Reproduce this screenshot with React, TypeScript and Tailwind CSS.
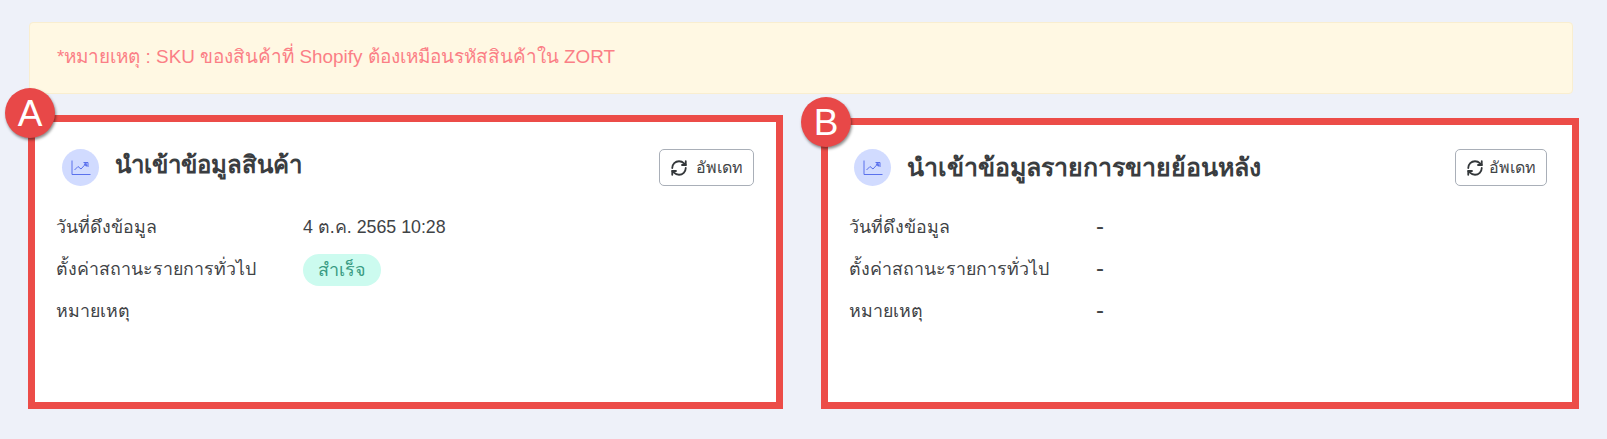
import { RefreshCw } from "lucide-react";

const font = { fontFamily: '"Liberation Sans", "Noto Sans", sans-serif' };

function ChartIcon() {
  return (
    <span className="flex h-[37px] w-[37px] shrink-0 items-center justify-center rounded-full bg-[#d1dbff]">
      <svg width="20" height="16" viewBox="0 0 20 16" fill="none" stroke="#5a71ec" strokeWidth="1">
        <path d="M1 0.5V14.5H19.5" />
        <path d="M3.5 10L7 6.5L10 9L15.5 3" />
        <path d="M12.5 2.5H17V7" />
        <path d="M13.5 3.5L16 6" strokeWidth="2" />
      </svg>
    </span>
  );
}

function Row({ label, children, pill, dash, labelClass }: any) {
  return (
    <div className="flex h-[42px] items-start text-[17.8px] leading-[28px] text-[#3f4346]">
      <div className={`shrink-0 pt-[1px] ${labelClass}`}>{label}</div>
      <div className={pill ? "" : dash ? "text-[24px] font-light" : "pt-[1px]"}>{children}</div>
    </div>
  );
}

function Card({ title, className, badge, badgeClass, headerClass, titleClass, buttonClass, bodyClass, children }: any) {
  return (
    <section className={`relative border-[7px] border-[#ec4c48] bg-white ${className}`}>
      <div className={`absolute flex h-[50px] w-[50px] items-center justify-center rounded-full bg-[#e84848] text-[37px] leading-none text-white shadow-[1px_2px_3px_rgba(0,0,0,0.45)] ${badgeClass}`}>
        {badge}
      </div>
      <div className={`flex items-start justify-between ${headerClass}`}>
        <div className="flex items-center gap-[16px]">
          <ChartIcon />
          <h2 className={`font-bold leading-[36px] text-[#3a3d40] ${titleClass}`}>{title}</h2>
        </div>
        <button className={`flex h-[37px] items-center rounded-[5px] border border-[#a9afb8] bg-white text-[16px] text-[#3f4346] ${buttonClass}`}>
          <RefreshCw size={18} strokeWidth={2.4} className="text-[#33373a]" />
          อัพเดท
        </button>
      </div>
      <div className={`pt-[17px] ${bodyClass}`}>{children}</div>
    </section>
  );
}

export default function App() {
  return (
    <div className="h-[439px] w-[1607px] overflow-hidden bg-[#eef1f9] pl-[28px] pt-[22px]" style={font}>
      <div className="ml-[1px] flex h-[72px] w-[1544px] items-center rounded-[4px] border border-[#f9eed0] bg-[#fff8e3] pb-[1px] pl-[27px] text-[18.9px] text-[#fb7f86]">
        *หมายเหตุ : SKU ของสินค้าที่ Shopify ต้องเหมือนรหัสสินค้าใน ZORT
      </div>
      <div className="mt-[21px] flex items-end gap-[38px]">
        <Card
          title="นำเข้าข้อมูลสินค้า"
          badge="A"
          badgeClass="-left-[30px] -top-[34px]"
          className="h-[294px] w-[755px]"
          headerClass="h-[73px] pl-[27px] pr-[22px] pt-[27px]"
          titleClass="-mt-[6px] text-[24px]"
          buttonClass="gap-[8px] pl-[10px] pr-[10px]"
          bodyClass="pl-[21px]"
        >
          <Row label="วันที่ดึงข้อมูล" labelClass="w-[247px]">4 ต.ค. 2565 10:28</Row>
          <Row label="ตั้งค่าสถานะรายการทั่วไป" labelClass="w-[247px]" pill>
            <span className="flex h-[32px] w-[78px] items-center justify-center rounded-full bg-[#ccfbef] text-[18px] text-[#3a9c83]">สำเร็จ</span>
          </Row>
          <Row label="หมายเหตุ" labelClass="w-[247px]" />
        </Card>
        <Card
          title="นำเข้าข้อมูลรายการขายย้อนหลัง"
          badge="B"
          badgeClass="-left-[27px] -top-[28px]"
          className="h-[291px] w-[758px]"
          headerClass="h-[70px] pl-[26px] pr-[25px] pt-[24px]"
          titleClass="-mt-[2px] text-[25px]"
          buttonClass="gap-[5px] pl-[10px] pr-[10px]"
          bodyClass="pl-[21px]"
        >
          <Row label="วันที่ดึงข้อมูล" labelClass="w-[247px]" dash>-</Row>
          <Row label="ตั้งค่าสถานะรายการทั่วไป" labelClass="w-[247px]" dash>-</Row>
          <Row label="หมายเหตุ" labelClass="w-[247px]" dash>-</Row>
        </Card>
      </div>
    </div>
  );
}
